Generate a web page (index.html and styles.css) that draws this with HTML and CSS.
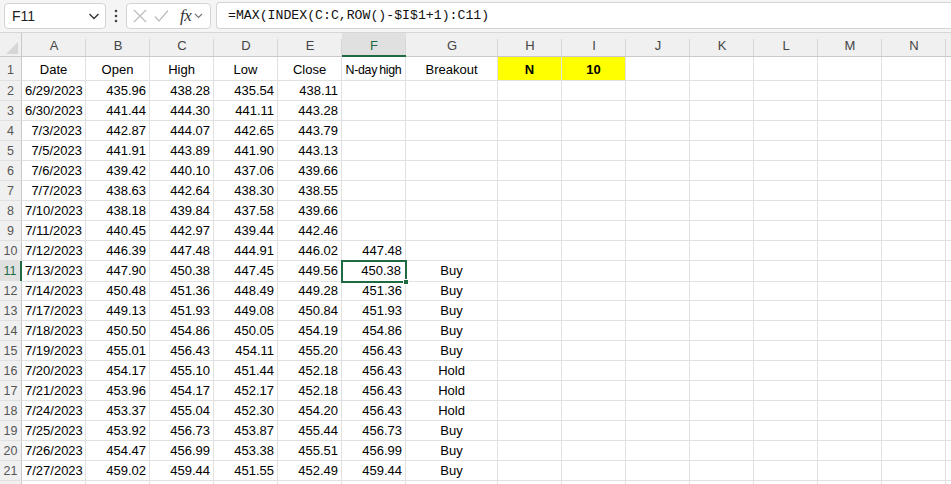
FILE: index.html
```html
<!DOCTYPE html>
<html>
<head>
<meta charset="utf-8">
<link rel="stylesheet" href="styles.css">
</head>
<body>
<div class="app">
  <div class="fbar">
    <div class="namebox"><span>F11</span>
      <svg class="chev" width="12" height="8" viewBox="0 0 12 8"><path d="M1.5 2 L6 6.5 L10.5 2" fill="none" stroke="#333" stroke-width="1.4"/></svg>
    </div>
    <svg class="dots" width="4" height="14" viewBox="0 0 4 14"><circle cx="2" cy="2" r="1.3" fill="#444"/><circle cx="2" cy="7" r="1.3" fill="#444"/><circle cx="2" cy="12" r="1.3" fill="#444"/></svg>
    <div class="fxbox">
      <svg width="14" height="14" viewBox="0 0 14 14"><path d="M1 1 L13 13 M13 1 L1 13" stroke="#bdbdbd" stroke-width="1.2" fill="none"/></svg>
      <svg width="15" height="14" viewBox="0 0 15 14"><path d="M1 7.5 L5 12 L14 1.5" stroke="#bdbdbd" stroke-width="1.2" fill="none"/></svg>
      <span class="fx">fx</span>
      <svg width="9" height="6" viewBox="0 0 9 6"><path d="M1 1 L4.5 4.5 L8 1" stroke="#777" stroke-width="1.1" fill="none"/></svg>
    </div>
    <div class="formula">=MAX(INDEX(C:C,ROW()-$I$1+1):C11)</div>
  </div>

  <div class="sheet">
    <div class="row hdr">
      <div class="corner"><svg width="12" height="12" viewBox="0 0 12 12"><path d="M12 0 L12 12 L0 12 Z" fill="#d6d6d6"/></svg></div>
      <div class="ch">A</div><div class="ch">B</div><div class="ch">C</div><div class="ch">D</div><div class="ch">E</div><div class="ch sel">F</div><div class="ch">G</div><div class="ch">H</div><div class="ch">I</div><div class="ch">J</div><div class="ch">K</div><div class="ch">L</div><div class="ch">M</div><div class="ch">N</div><div class="ch"></div>
    </div>
    <div class="row r1">
      <div class="rh">1</div><div class="c">Date</div><div class="c">Open</div><div class="c">High</div><div class="c">Low</div><div class="c">Close</div><div class="c tight">N-day high</div><div class="c">Breakout</div><div class="c y b">N</div><div class="c y b">10</div><div></div><div></div><div></div><div></div><div></div><div></div>
    </div>
    <div class="row"><div class="rh">2</div><div class="n">6/29/2023</div><div class="n">435.96</div><div class="n">438.28</div><div class="n">435.54</div><div class="n">438.11</div><div></div><div></div><div></div><div></div><div></div><div></div><div></div><div></div><div></div><div></div></div>
    <div class="row"><div class="rh">3</div><div class="n">6/30/2023</div><div class="n">441.44</div><div class="n">444.30</div><div class="n">441.11</div><div class="n">443.28</div><div></div><div></div><div></div><div></div><div></div><div></div><div></div><div></div><div></div><div></div></div>
    <div class="row"><div class="rh">4</div><div class="n">7/3/2023</div><div class="n">442.87</div><div class="n">444.07</div><div class="n">442.65</div><div class="n">443.79</div><div></div><div></div><div></div><div></div><div></div><div></div><div></div><div></div><div></div><div></div></div>
    <div class="row"><div class="rh">5</div><div class="n">7/5/2023</div><div class="n">441.91</div><div class="n">443.89</div><div class="n">441.90</div><div class="n">443.13</div><div></div><div></div><div></div><div></div><div></div><div></div><div></div><div></div><div></div><div></div></div>
    <div class="row"><div class="rh">6</div><div class="n">7/6/2023</div><div class="n">439.42</div><div class="n">440.10</div><div class="n">437.06</div><div class="n">439.66</div><div></div><div></div><div></div><div></div><div></div><div></div><div></div><div></div><div></div><div></div></div>
    <div class="row"><div class="rh">7</div><div class="n">7/7/2023</div><div class="n">438.63</div><div class="n">442.64</div><div class="n">438.30</div><div class="n">438.55</div><div></div><div></div><div></div><div></div><div></div><div></div><div></div><div></div><div></div><div></div></div>
    <div class="row"><div class="rh">8</div><div class="n">7/10/2023</div><div class="n">438.18</div><div class="n">439.84</div><div class="n">437.58</div><div class="n">439.66</div><div></div><div></div><div></div><div></div><div></div><div></div><div></div><div></div><div></div><div></div></div>
    <div class="row"><div class="rh">9</div><div class="n">7/11/2023</div><div class="n">440.45</div><div class="n">442.97</div><div class="n">439.44</div><div class="n">442.46</div><div></div><div></div><div></div><div></div><div></div><div></div><div></div><div></div><div></div><div></div></div>
    <div class="row"><div class="rh">10</div><div class="n">7/12/2023</div><div class="n">446.39</div><div class="n">447.48</div><div class="n">444.91</div><div class="n">446.02</div><div class="n">447.48</div><div></div><div></div><div></div><div></div><div></div><div></div><div></div><div></div><div></div></div>
    <div class="row"><div class="rh selr">11</div><div class="n">7/13/2023</div><div class="n">447.90</div><div class="n">450.38</div><div class="n">447.45</div><div class="n">449.56</div><div class="n active">450.38<span class="handle"></span></div><div class="c">Buy</div><div></div><div></div><div></div><div></div><div></div><div></div><div></div><div></div></div>
    <div class="row"><div class="rh">12</div><div class="n">7/14/2023</div><div class="n">450.48</div><div class="n">451.36</div><div class="n">448.49</div><div class="n">449.28</div><div class="n">451.36</div><div class="c">Buy</div><div></div><div></div><div></div><div></div><div></div><div></div><div></div><div></div></div>
    <div class="row"><div class="rh">13</div><div class="n">7/17/2023</div><div class="n">449.13</div><div class="n">451.93</div><div class="n">449.08</div><div class="n">450.84</div><div class="n">451.93</div><div class="c">Buy</div><div></div><div></div><div></div><div></div><div></div><div></div><div></div><div></div></div>
    <div class="row"><div class="rh">14</div><div class="n">7/18/2023</div><div class="n">450.50</div><div class="n">454.86</div><div class="n">450.05</div><div class="n">454.19</div><div class="n">454.86</div><div class="c">Buy</div><div></div><div></div><div></div><div></div><div></div><div></div><div></div><div></div></div>
    <div class="row"><div class="rh">15</div><div class="n">7/19/2023</div><div class="n">455.01</div><div class="n">456.43</div><div class="n">454.11</div><div class="n">455.20</div><div class="n">456.43</div><div class="c">Buy</div><div></div><div></div><div></div><div></div><div></div><div></div><div></div><div></div></div>
    <div class="row"><div class="rh">16</div><div class="n">7/20/2023</div><div class="n">454.17</div><div class="n">455.10</div><div class="n">451.44</div><div class="n">452.18</div><div class="n">456.43</div><div class="c">Hold</div><div></div><div></div><div></div><div></div><div></div><div></div><div></div><div></div></div>
    <div class="row"><div class="rh">17</div><div class="n">7/21/2023</div><div class="n">453.96</div><div class="n">454.17</div><div class="n">452.17</div><div class="n">452.18</div><div class="n">456.43</div><div class="c">Hold</div><div></div><div></div><div></div><div></div><div></div><div></div><div></div><div></div></div>
    <div class="row"><div class="rh">18</div><div class="n">7/24/2023</div><div class="n">453.37</div><div class="n">455.04</div><div class="n">452.30</div><div class="n">454.20</div><div class="n">456.43</div><div class="c">Hold</div><div></div><div></div><div></div><div></div><div></div><div></div><div></div><div></div></div>
    <div class="row"><div class="rh">19</div><div class="n">7/25/2023</div><div class="n">453.92</div><div class="n">456.73</div><div class="n">453.87</div><div class="n">455.44</div><div class="n">456.73</div><div class="c">Buy</div><div></div><div></div><div></div><div></div><div></div><div></div><div></div><div></div></div>
    <div class="row"><div class="rh">20</div><div class="n">7/26/2023</div><div class="n">454.47</div><div class="n">456.99</div><div class="n">453.38</div><div class="n">455.51</div><div class="n">456.99</div><div class="c">Buy</div><div></div><div></div><div></div><div></div><div></div><div></div><div></div><div></div></div>
    <div class="row"><div class="rh">21</div><div class="n">7/27/2023</div><div class="n">459.02</div><div class="n">459.44</div><div class="n">451.55</div><div class="n">452.49</div><div class="n">459.44</div><div class="c">Buy</div><div></div><div></div><div></div><div></div><div></div><div></div><div></div><div></div></div>
    <div class="row"><div class="rh"></div><div></div><div></div><div></div><div></div><div></div><div></div><div></div><div></div><div></div><div></div><div></div><div></div><div></div><div></div><div></div></div>
  </div>
</div>
</body>
</html>
```

FILE: styles.css
```css
* { box-sizing: border-box; }
html, body { margin: 0; padding: 0; background: #fff; overflow: hidden; }
body { width: 951px; height: 484px; font-family: "Liberation Sans", Arial, sans-serif; }
.app { width: 951px; height: 484px; overflow: hidden; }

.fbar {
  height: 33px;
  background: #f5f5f5;
  border-bottom: 1px solid #d6d6d6;
  display: flex;
  align-items: center;
  padding: 0 0 1px 4px;
}
.namebox {
  width: 102px; height: 26px;
  background: #fff;
  border: 1px solid #d4d4d4;
  border-radius: 4px;
  display: flex; align-items: center; justify-content: space-between;
  padding: 0 5px 0 7px;
  font-size: 14px; color: #222;
}
.dots { margin: 0 8px 0 8px; }
.fxbox {
  width: 85px; height: 26px;
  background: #fff;
  border: 1px solid #d4d4d4;
  border-radius: 4px;
  display: flex; align-items: center;
  padding: 0 3px 0 6px;
  gap: 7px;
}
.fx {
  font-family: "Liberation Serif", "DejaVu Serif", serif;
  font-style: italic;
  font-size: 17px;
  color: #333;
  margin-left: 4px;
  margin-right: -4px;
  letter-spacing: -0.5px;
}
.formula {
  flex: 1;
  margin-left: 5px;
  height: 27px;
  background: #fff;
  border: 1px solid #d4d4d4;
  border-right: none;
  border-radius: 4px 0 0 4px;
  font-family: "Liberation Mono", "DejaVu Sans Mono", monospace;
  font-size: 13.2px;
  color: #111;
  line-height: 25px;
  padding-left: 11px;
}

.sheet { font-size: 13px; color: #000; }
.row {
  display: grid;
  grid-template-columns: 22px repeat(6, 64px) 92px repeat(7, 64px) 64px;
  height: 20px;
}
.row > div {
  border-right: 1px solid #e1e1e1;
  border-bottom: 1px solid #e1e1e1;
  line-height: 20px;
  padding: 0 3px;
  white-space: nowrap;
  overflow: hidden;
}
.row.hdr { height: 24px; }
.row.hdr > div {
  background: linear-gradient(#d6d6d6, #d6d6d6) right bottom / 1px 17px no-repeat, #f0f0f0;
  border-right: none;
  border-bottom: 1px solid #c9c9c9;
  text-align: center;
  color: #444;
  line-height: 26px;
  font-size: 13px;
}
.row.hdr > .corner {
  display: flex; align-items: flex-end; justify-content: flex-end;
  padding: 0 3px 2px 0;
  background: #f0f0f0;
  border-right: 1px solid #c9c9c9;
}
.row.hdr > .ch.sel {
  background: linear-gradient(#d6d6d6, #d6d6d6) right bottom / 1px 17px no-repeat, #e0e0e0;
  border-bottom: 2px solid #1e6b41;
  color: #1e6b41;
}
.row.r1 { height: 24px; }
.row.r1 > div { line-height: 26px; }
.row > .tight {
  font-size: 12.4px;
  letter-spacing: -0.3px;
  word-spacing: -1px;
  padding: 0 1px;
}

.rh {
  background: #f0f0f0;
  color: #555;
  text-align: center;
  padding: 0 !important;
  font-size: 12.5px;
  border-right: 1px solid #c9c9c9 !important;
}
.rh.selr {
  background: #e0e0e0;
  color: #1e6b41;
  border-right: 2px solid #1e6b41 !important;
}
.n { text-align: right; }
.c { text-align: center; }
.y { background: #ffff00; }
.b { font-weight: bold; }

.row > .active {
  position: relative;
  overflow: visible;
  outline: 2px solid #1e6b41;
  outline-offset: -1px;
  z-index: 2;
  padding-right: 4px;
}
.handle {
  position: absolute;
  right: -4px; bottom: -4px;
  width: 6px; height: 6px;
  background: #1e6b41;
  border: 1px solid #fff;
}
```
